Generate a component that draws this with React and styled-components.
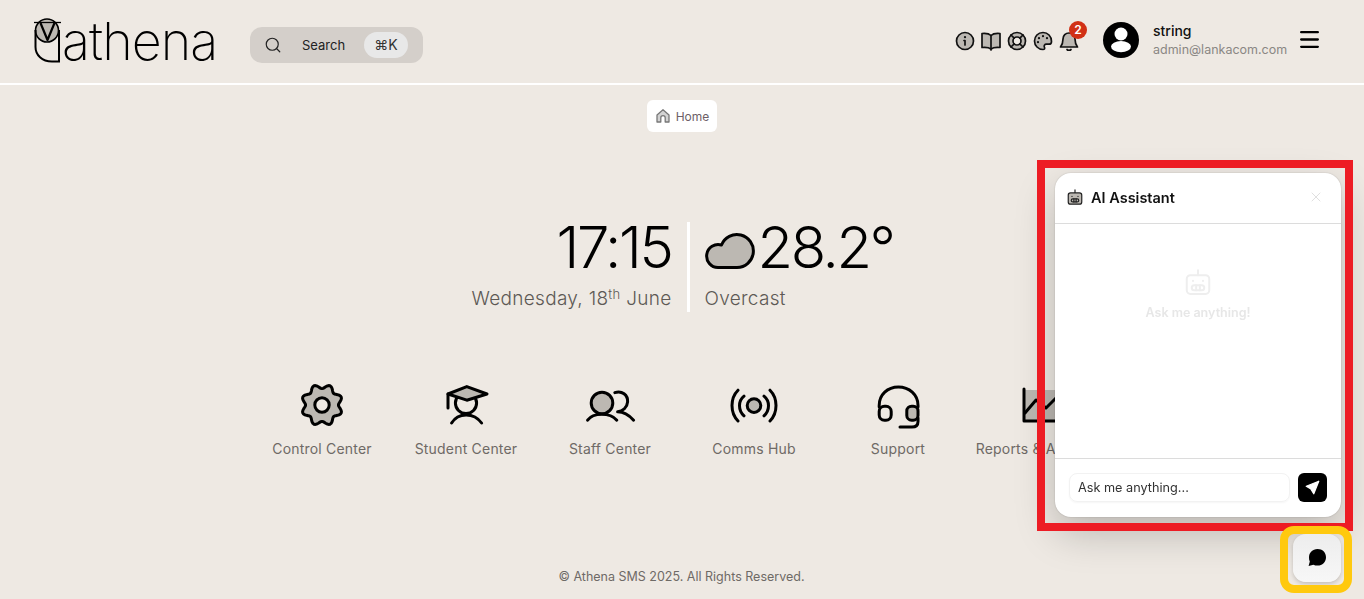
import styled, { createGlobalStyle } from "styled-components";
import { Search, X, Menu } from "lucide-react";

const TONE = "#bcb8b2";

const GlobalStyle = createGlobalStyle`
  html, body { margin: 0; padding: 0; height: 100%; overflow: hidden; }
  body { background: #eee9e3; font-family: "Inter", "Liberation Sans", sans-serif; color: #000; }
  * { box-sizing: border-box; }
`;

const Page = styled.div`
  display: flex;
  flex-direction: column;
  align-items: stretch;
  height: 100vh;
`;

const TopBar = styled.header`
  display: flex;
  align-items: center;
  height: 85px;
  flex: none;
  padding: 0 42px 4px 34px;
  border-bottom: 2px solid #fff;
`;

const Logo = styled.div`
  display: flex;
  align-items: center;
  width: 216px;
  gap: 2px;
`;

const OwlMark = styled.svg`
  width: 26px;
  height: 46px;
  overflow: visible;
  fill: none;
  stroke: #000;
  stroke-width: 2;
`;

const Wordmark = styled.span`
  font-size: 52px;
  font-weight: 200;
  line-height: 52px;
  letter-spacing: -0.9px;
  margin-top: 4px;
`;

const SearchPill = styled.div`
  display: flex;
  align-items: center;
  width: 173px;
  height: 36px;
  margin-top: 10px;
  background: #d4cfca;
  border-radius: 12px;
  padding: 0 15px 0 14px;
  font-size: 13px;
  color: #222;
`;

const SearchLabel = styled.span`
  margin-left: 20px;
  flex: 1;
`;

const Kbd = styled.span`
  display: flex;
  align-items: center;
  justify-content: center;
  width: 44px;
  height: 26px;
  border-radius: 13px;
  background: #e8e8e8;
  font-size: 14px;
  color: #333;
`;

const Spacer = styled.div`
  flex: 1;
`;

const Tools = styled.div`
  display: flex;
  align-items: center;
  gap: 2px;
  margin-top: 2px;
`;

const ToolIcon = styled.svg`
  width: 24px;
  height: 24px;
  display: block;
  fill: none;
  stroke: #111;
  stroke-width: 1.7;
  stroke-linecap: round;
  stroke-linejoin: round;
`;

const BellWrap = styled.div`
  position: relative;
`;

const Badge = styled.span`
  position: absolute;
  top: -8px;
  left: 12px;
  width: 18px;
  height: 18px;
  border-radius: 50%;
  background: #d13015;
  color: #fff;
  font-size: 12px;
  font-weight: 600;
  display: flex;
  align-items: center;
  justify-content: center;
`;

const Avatar = styled.svg`
  width: 36px;
  height: 36px;
  display: block;
  margin-left: 22px;
`;

const UserInfo = styled.div`
  display: flex;
  flex-direction: column;
  gap: 3px;
  margin-left: 14px;
  width: 148px;
`;

const UserName = styled.span`
  font-size: 14px;
  font-weight: 500;
  line-height: 17px;
  color: #111;
`;

const UserMail = styled.span`
  font-size: 12.5px;
  line-height: 16px;
  color: #8a8784;
`;

const Burger = styled(Menu)`
  display: block;
  margin-left: -4px;
`;

const Main = styled.main`
  flex: 1;
  display: flex;
  flex-direction: column;
  align-items: center;
`;

const Crumb = styled.div`
  display: flex;
  align-items: center;
  gap: 5px;
  height: 32px;
  margin-top: 15px;
  padding: 0 8px;
  background: #fff;
  border-radius: 6px;
  font-size: 12px;
  color: #6d5f66;
`;

const CrumbIcon = styled.svg`
  width: 16px;
  height: 16px;
  fill: #d2d2d2;
  stroke: #777;
  stroke-width: 1.3;
  stroke-linejoin: round;
`;

const Clock = styled.section`
  display: flex;
  align-items: stretch;
  margin-top: 90px;
  margin-left: -2px;
`;

const ClockSide = styled.div`
  display: flex;
  flex-direction: column;
  align-items: ${({ $end }) => ($end ? "flex-end" : "flex-start")};
  padding: ${({ $end }) => ($end ? "0 15px 0 0" : "0 0 0 15px")};
  width: ${({ $end }) => ($end ? "215px" : "201px")};
`;

const Divider = styled.div`
  width: 3px;
  height: 90px;
  background: #fff;
`;

const BigText = styled.div`
  font-size: 58px;
  font-weight: 300;
  line-height: 50px;
  height: 50px;
  letter-spacing: -2.4px;
  color: #000;
`;

const WeatherRow = styled.div`
  display: flex;
  align-items: center;
  gap: 1px;
`;

const Cloud = styled.svg`
  width: 54px;
  height: 40px;
  margin-left: -2px;
  margin-top: 7px;
  fill: ${TONE};
  stroke: #000;
  stroke-width: 3;
  stroke-linejoin: round;
`;

const SubText = styled.div`
  margin-top: 15px;
  font-size: 19px;
  line-height: 24px;
  font-weight: 300;
  letter-spacing: 0.3px;
  color: #5d5955;
  white-space: nowrap;

  sup {
    font-size: 13px;
    line-height: 0;
    vertical-align: 6px;
  }
`;

const Nav = styled.nav`
  display: grid;
  grid-template-columns: repeat(6, 144px);
  margin-top: 69px;
`;

const NavItem = styled.a`
  display: flex;
  flex-direction: column;
  align-items: center;
  gap: 10px;
  font-size: 14px;
  line-height: 20px;
  letter-spacing: 0.2px;
  color: #6e6a66;
  white-space: nowrap;
`;

const NavIcon = styled.svg`
  width: 48px;
  height: 48px;
  display: block;
  overflow: visible;
  fill: none;
  stroke: #000;
  stroke-width: 1.5;
  stroke-linecap: round;
  stroke-linejoin: round;
`;

const Footer = styled.footer`
  flex: none;
  height: 34px;
  text-align: center;
  font-size: 12.5px;
  line-height: 16px;
  padding-top: 4px;
  padding-right: 1px;
  color: #6e6a66;
`;

const ChatPanel = styled.aside`
  position: fixed;
  left: 1055px;
  top: 173px;
  width: 286px;
  height: 344px;
  display: flex;
  flex-direction: column;
  background: #fff;
  border-radius: 16px;
  box-shadow: 0 16px 40px rgba(0, 0, 0, 0.22), 0 0 2px rgba(0, 0, 0, 0.2);
`;

const ChatHead = styled.div`
  display: flex;
  align-items: center;
  gap: 7px;
  height: 51px;
  padding: 0 17px 2px 11px;
  border-bottom: 1px solid #dcdcdc;
  font-size: 14.5px;
  font-weight: 600;
  color: #111;
`;

const HeadTitle = styled.span`
  flex: 1;
`;

const RobotIcon = styled.svg`
  width: ${({ $size }) => $size}px;
  height: ${({ $size }) => $size}px;
  fill: ${({ $faint }) => ($faint ? "none" : TONE)};
  stroke: ${({ $faint }) => ($faint ? "#eeeeee" : "#222")};
  stroke-width: 1.6;
  stroke-linecap: round;
  stroke-linejoin: round;
  display: block;
`;

const ChatBody = styled.div`
  flex: 1;
  display: flex;
  flex-direction: column;
  align-items: center;
  justify-content: center;
  gap: 8px;
  padding-bottom: 95px;
  font-size: 12.5px;
  font-weight: 600;
  color: #e7e7e7;
`;

const ChatFoot = styled.form`
  display: flex;
  align-items: center;
  gap: 8px;
  height: 59px;
  padding: 0 14px 2px;
  border-top: 1px solid #dcdcdc;
`;

const ChatInput = styled.div`
  flex: 1;
  height: 29px;
  display: flex;
  align-items: center;
  padding: 0 8px;
  border: 1px solid #f2f2f2;
  border-radius: 8px;
  box-shadow: 0 1px 2px rgba(0, 0, 0, 0.04);
  font-size: 12.7px;
  color: #333;
`;

const SendButton = styled.button`
  width: 29px;
  height: 29px;
  padding: 0;
  border: 0;
  border-radius: 6px;
  background: #000;
  display: flex;
  align-items: center;
  justify-content: center;
`;

const ChatToggle = styled.button`
  position: fixed;
  left: 1293px;
  top: 534px;
  width: 48px;
  height: 48px;
  padding: 0;
  border: 0;
  border-radius: 13px;
  background: linear-gradient(180deg, #ededed, #f7f7f7);
  box-shadow: 0 2px 4px rgba(0, 0, 0, 0.18);
  display: flex;
  align-items: center;
  justify-content: center;
`;

/* hand-drawn marks that sit on the screenshot */
const Annotation = styled.div`
  position: fixed;
  left: ${({ $x }) => $x}px;
  top: ${({ $y }) => $y}px;
  width: ${({ $w }) => $w}px;
  height: ${({ $h }) => $h}px;
  border: 8px solid ${({ $color }) => $color};
  border-radius: ${({ $round }) => $round}px;
  pointer-events: none;
`;

const gearPath = () => {
  const pts = [];
  for (let i = 0; i < 96; i++) {
    const a = (i / 96) * Math.PI * 2;
    const r = 9.3 - 1.1 * Math.cos(8 * a);
    pts.push(`${(12 + r * Math.sin(a)).toFixed(2)} ${(12 - r * Math.cos(a)).toFixed(2)}`);
  }
  return `M${pts.join("L")}Z`;
};

const navItems = [
  {
    label: "Control Center",
    art: (
      <>
        <path d={gearPath()} fill={TONE} />
        <circle cx="12" cy="12" r="3.6" fill="#eee9e3" />
      </>
    ),
  },
  {
    label: "Student Center",
    art: (
      <>
        <circle cx="12" cy="11" r="5.3" />
        <path d="M4.8 21C8 15.6 16 15.6 19.8 21" />
        <path d="M3 6.5L12.4 2.8L22.5 6.5L12.4 9.6Z" fill={TONE} />
        <path d="M3 6.5V13.5" />
      </>
    ),
  },
  {
    label: "Staff Center",
    art: (
      <>
        <circle cx="8" cy="11" r="5.4" fill={TONE} />
        <path d="M.8 19.6C3.6 15.6 12 15.6 15.4 19.6" />
        <path d="M14.4 5.8C18 4.6 21 7 20.8 10.4C20.6 13.2 18.4 15.2 15.8 15.4C19 15.4 21.8 17.4 23.8 19.6" />
      </>
    ),
  },
  {
    label: "Comms Hub",
    art: (
      <>
        <circle cx="12" cy="12.3" r="3.4" fill={TONE} />
        <path d="M7 7.6C4 10 4 14.6 7 17.4M17 7.6C20 10 20 14.6 17 17.4" />
        <path d="M4 4.6C0 8.6 0 16 4 20M20 4.6C24 8.6 24 16 20 20" />
      </>
    ),
  },
  {
    label: "Support",
    art: (
      <>
        <path d="M2.6 13V12.2C2.6 6.8 6.8 3 12.2 3S22 6.8 22 12.2V13" />
        <rect x="2.6" y="12.6" width="6" height="7" rx="2.6" />
        <rect x="16.4" y="12.6" width="5.6" height="7" rx="2.4" fill={TONE} />
        <path d="M22 18.5V20.2C22 22 20.8 23 19 23H13" />
      </>
    ),
  },
  {
    label: "Reports & Analytics",
    art: (
      <>
        <path d="M3 4.5H23V20H3Z" fill={TONE} stroke="none" />
        <path d="M3 4V20H23" />
        <path d="M3.5 16L9 9.5L14 13.5L21 6.5" />
      </>
    ),
  },
];

const Robot = ({ size, faint }) => (
  <RobotIcon viewBox="0 0 24 24" $size={size} $faint={faint}>
    <path d="M12 6.5V2.5" />
    <rect x="3" y="6.5" width="18" height="15" rx="3" />
    <rect x="7" y="14.5" width="10" height="4" rx="2" />
    <path d="M8 11V11.2M16 11V11.2M10.5 14.5V18.5M13.5 14.5V18.5" />
  </RobotIcon>
);

export default function App() {
  return (
    <>
      <GlobalStyle />
      <Page>
        <TopBar>
          <Logo>
            <OwlMark viewBox="0 0 26 46">
              <circle cx="13" cy="13.5" r="11.5" fill={TONE} strokeWidth="1.6" />
              <path d="M1.5 13V30C1.5 38 8 44.5 18 44.5H25V13" />
              <path d="M0 5.5H27" strokeWidth="1.3" />
              <path d="M6.5 6L13.5 23L20.5 6" strokeWidth="2.2" strokeLinejoin="round" />
            </OwlMark>
            <Wordmark>athena</Wordmark>
          </Logo>
          <SearchPill>
            <Search size={18} strokeWidth={1.6} color="#222" />
            <SearchLabel>Search</SearchLabel>
            <Kbd>⌘K</Kbd>
          </SearchPill>
          <Spacer />
          <Tools>
            <ToolIcon viewBox="0 0 24 24">
              <circle cx="12" cy="12" r="8.5" fill={TONE} />
              <path d="M12 11.5V16M11 11.5H12" />
              <path d="M12 8V8.2" strokeWidth="2.2" />
            </ToolIcon>
            <ToolIcon viewBox="0 0 24 24">
              <path d="M12 6.5C10 4.5 6 4.2 3 4.5V18.5C6 18.2 10 18.5 12 20C14 18.5 18 18.2 21 18.5V4.5C18 4.2 14 4.5 12 6.5Z" fill={TONE} />
              <path d="M12 6.5V21" />
            </ToolIcon>
            <ToolIcon viewBox="0 0 24 24">
              <circle cx="12" cy="12" r="8.5" fill={TONE} />
              <circle cx="12" cy="12" r="4" fill="#eee9e3" />
              <path d="M6 6L9.2 9.2M18 6L14.8 9.2M6 18L9.2 14.8M18 18L14.8 14.8" />
            </ToolIcon>
            <ToolIcon viewBox="0 0 24 24">
              <path d="M12 3.5C7 3.5 3.5 7.3 3.5 12C3.5 16.7 7.3 20.5 12 20.5C13.6 20.5 14 19.4 13.4 18.2C12.7 16.6 13.6 15.2 15.4 15.2H18C19.6 15.2 20.5 14 20.5 12.4C20.5 7.2 16.8 3.5 12 3.5Z" fill={TONE} />
              <path d="M8 9V9.2M12 7V7.2M16 9V9.2M7 13V13.2" strokeWidth="2.2" />
            </ToolIcon>
            <BellWrap>
              <ToolIcon viewBox="0 0 24 24">
                <path d="M6 10C6 6.6 8.6 4 12 4S18 6.6 18 10C18 14 19 16 20.5 18H3.5C5 16 6 14 6 10Z" fill={TONE} />
                <path d="M10 20.5C10.5 21.5 13.5 21.5 14 20.5" />
              </ToolIcon>
              <Badge>2</Badge>
            </BellWrap>
          </Tools>
          <Avatar viewBox="0 0 36 36">
            <circle cx="18" cy="18" r="18" fill="#000" />
            <circle cx="18" cy="12" r="6.5" fill="#fff" />
            <ellipse cx="18" cy="24.6" rx="10" ry="5.6" fill="#fff" />
          </Avatar>
          <UserInfo>
            <UserName>string</UserName>
            <UserMail>admin@lankacom.com</UserMail>
          </UserInfo>
          <Burger size={25} strokeWidth={2.2} color="#000" />
        </TopBar>

        <Main>
          <Crumb>
            <CrumbIcon viewBox="0 0 16 16">
              <path d="M2 7L8 1.8L14 7V14H10.2V9.8A2.2 2.2 0 0 0 5.8 9.8V14H2Z" />
            </CrumbIcon>
            Home
          </Crumb>

          <Clock>
            <ClockSide $end>
              <BigText>17:15</BigText>
              <SubText>
                Wednesday, 18<sup>th</sup> June
              </SubText>
            </ClockSide>
            <Divider />
            <ClockSide>
              <WeatherRow>
                <Cloud viewBox="0 0 54 40">
                  <path d="M15 36.5H34A16.5 16.5 0 1 0 18.5 14A11.5 11.5 0 1 0 15 36.5Z" />
                </Cloud>
                <BigText>28.2°</BigText>
              </WeatherRow>
              <SubText>Overcast</SubText>
            </ClockSide>
          </Clock>

          <Nav>
            {navItems.map((item) => (
              <NavItem key={item.label}>
                <NavIcon viewBox="0 0 24 24">{item.art}</NavIcon>
                {item.label}
              </NavItem>
            ))}
          </Nav>
        </Main>

        <Footer>© Athena SMS 2025. All Rights Reserved.</Footer>
      </Page>

      <ChatPanel>
        <ChatHead>
          <Robot size={18} />
          <HeadTitle>AI Assistant</HeadTitle>
          <X size={16} color="#e0e0e0" strokeWidth={1.5} />
        </ChatHead>
        <ChatBody>
          <Robot size={30} faint />
          Ask me anything!
        </ChatBody>
        <ChatFoot>
          <ChatInput>Ask me anything...</ChatInput>
          <SendButton type="button">
            <svg width="15" height="15" viewBox="0 0 24 24" fill="#fff">
              <path d="M22 2L2 10L9.5 14.5L14 22ZM22 2L9.5 14.5" stroke="#fff" strokeWidth="2" strokeLinejoin="round" />
            </svg>
          </SendButton>
        </ChatFoot>
      </ChatPanel>

      <ChatToggle type="button">
        <svg width="20" height="20" viewBox="0 0 20 20" fill="#000">
          <path d="M10.5 1C15.5 1 19 4.5 19 9.2S15.5 17.6 10.5 17.6C9 17.6 7.6 17.3 6.4 16.7L1.6 18L2.8 13.6C2.2 12.4 2 11 2 9.4C2 4.6 5.5 1 10.5 1Z" />
        </svg>
      </ChatToggle>

      <Annotation $x={1037} $y={160} $w={316} $h={371} $color="#ed1c24" $round={0} />
      <Annotation $x={1280} $y={526} $w={72} $h={67} $color="#ffc90e" $round={14} />
    </>
  );
}
